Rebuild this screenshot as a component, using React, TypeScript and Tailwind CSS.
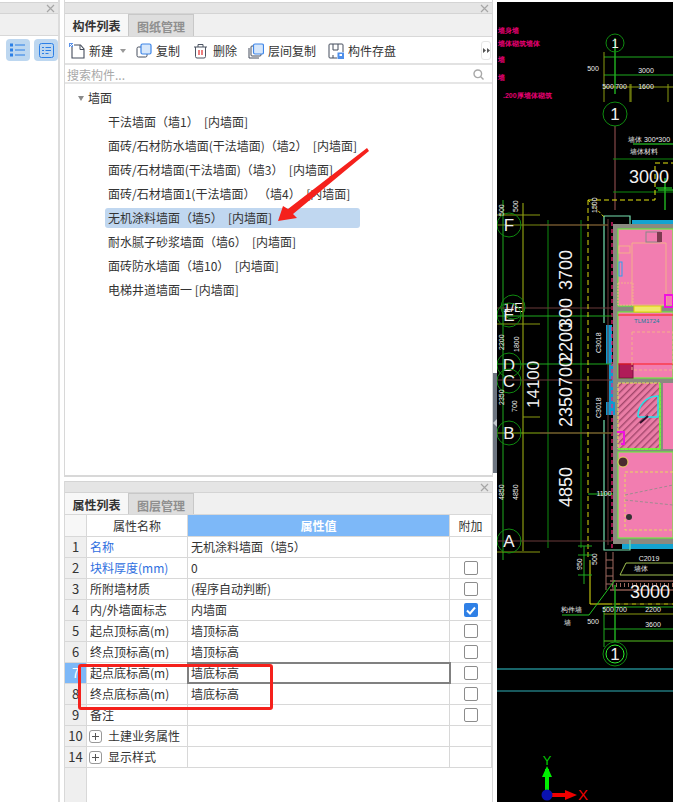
const treeItems = [
  '干法墙面（墙1）  [内墙面]',
  '面砖/石材防水墙面(干法墙面)（墙2）  [内墙面]',
  '面砖/石材墙面(干法墙面)（墙3）  [内墙面]',
  '面砖/石材墙面1(干法墙面） （墙4）  [内墙面]',
  '无机涂料墙面（墙5）  [内墙面]',
  '耐水腻子砂浆墙面（墙6）  [内墙面]',
  '面砖防水墙面（墙10）  [内墙面]',
  '电梯井道墙面一 [内墙面]',
];

type Row = {
  no: number;
  name: string;
  value?: string;
  blue?: boolean;
  box?: boolean;
  checked?: boolean;
  plus?: boolean;
  active?: boolean;
};

const rows: Row[] = [
  { no: 1, name: '名称', value: '无机涂料墙面（墙5）', blue: true },
  { no: 2, name: '块料厚度(mm)', value: '0', blue: true, box: true },
  { no: 3, name: '所附墙材质', value: '(程序自动判断)', box: true },
  { no: 4, name: '内/外墙面标志', value: '内墙面', box: true, checked: true },
  { no: 5, name: '起点顶标高(m)', value: '墙顶标高', box: true },
  { no: 6, name: '终点顶标高(m)', value: '墙顶标高', box: true },
  { no: 7, name: '起点底标高(m)', value: '墙底标高', box: true, active: true },
  { no: 8, name: '终点底标高(m)', value: '墙底标高', box: true },
  { no: 9, name: '备注', box: true },
  { no: 10, name: '土建业务属性', plus: true },
  { no: 14, name: '显示样式', plus: true },
];

const Close = () => (
  <svg width="9" height="9" viewBox="0 0 9 9" className="shrink-0">
    <path d="M1 1l7 7M8 1L1 8" stroke="#a6a6a6" strokeWidth="1.2" />
  </svg>
);

const TitleBar = () => (
  <div className="h-[10px] bg-[#e5e5e5] border-y border-[#d4d4d4] box-content flex items-center justify-end pr-[3px]">
    <Close />
  </div>
);

const Tabs = ({ first, second, height }: { first: string; second: string; height: string }) => (
  <div className={`${height} bg-[#f0f0f0] border-b border-[#d8d8d8] flex font-bold leading-[24px]`}>
    <div className="w-[64px] bg-[#f7f7f7] text-[#333] text-center border-r border-[#c8c8c8]">{first}</div>
    <div className="w-[65px] bg-[#dedede] text-[#8f8f8f] text-center border-r border-t border-[#c8c8c8]">{second}</div>
  </div>
);

const NewIcon = () => (
  <svg width="16" height="16" viewBox="0 0 16 16">
    <path d="M3 3.5V15h12V6L11.500 2H5" fill="none" stroke="#454d5c" strokeWidth="1.1" />
    <path d="M11 2v4.500h4" fill="none" stroke="#454d5c" strokeWidth="1" />
    <path d="M0 0h4v4H0z" fill="#5b93ea" />
    <path d="M1 1h1v1H1zM3 1h1v1H3zM2 2h1v1H2zM1 3h1v1H1z" fill="#fff" />
  </svg>
);

const CopyIcon = () => (
  <svg width="16" height="16" viewBox="0 0 16 16">
    <rect x="1" y="4" width="10" height="10" rx="1.500" fill="#fff" stroke="#454d5c" />
    <rect x="5" y="1" width="10" height="10" rx="1.500" fill="#d6e7fb" stroke="#3f86e8" strokeWidth="1.2" />
  </svg>
);

const TrashIcon = () => (
  <svg width="15" height="16" viewBox="0 0 15 16">
    <path d="M1 4h13M5 4V1.500h5V4" fill="none" stroke="#4d5563" />
    <path d="M2.500 4v9.500a1.500 1.500 0 001.500 1.500h7a1.500 1.500 0 001.500-1.500V4" fill="none" stroke="#4d5563" />
    <path d="M6 7v5M9 7v5" stroke="#e02b2b" strokeWidth="1.2" />
  </svg>
);

const LayerCopyIcon = () => (
  <svg width="16" height="16" viewBox="0 0 16 16">
    <path d="M1 5v10h10" fill="none" stroke="#454d5c" />
    <rect x="3" y="3" width="10" height="10" rx="1" fill="#fff" stroke="#454d5c" />
    <rect x="5.500" y="1" width="10" height="10" rx="1.500" fill="#d6e7fb" stroke="#3f86e8" strokeWidth="1.2" />
  </svg>
);

const SaveIcon = () => (
  <svg width="16" height="16" viewBox="0 0 16 16">
    <path d="M9 15H2a1 1 0 01-1-1V2a1 1 0 011-1h12a1 1 0 011 1v7" fill="none" stroke="#454d5c" />
    <path d="M5 1v6h5V1M5 15v-3" fill="none" stroke="#454d5c" />
    <rect x="9.500" y="9.500" width="6.500" height="6.500" fill="#4f8fea" />
    <rect x="11.500" y="11" width="2.500" height="2" fill="#fff" />
  </svg>
);

const ToolItem = ({ icon, label, className }: { icon: React.ReactNode; label: string; className: string }) => (
  <div className={`flex items-center gap-[4px] ${className}`}>
    <span className="flex w-[16px]">{icon}</span>
    <span>{label}</span>
  </div>
);

const Tree = () => (
  <div className="flex-1 bg-white pt-[4px] pl-[13px] leading-[20px]">
    <div className="flex items-center h-[20px]">
      <span className="w-0 h-0 border-x-[3.5px] border-x-transparent border-t-[5px] border-t-[#8a8a8a] mr-[4px]" />
      墙面
    </div>
    <div className="flex flex-col items-start gap-[4px] mt-[4px]">
      {treeItems.map((t, i) => (
        <div
          key={t}
          className={`h-[20px] ml-[27px] pl-[3px] whitespace-pre rounded-[3px] ${
            i === 4 ? 'w-[255px] bg-[#c0d7f0]' : ''
          }`}
        >
          {t}
        </div>
      ))}
    </div>
  </div>
);

const PropTable = () => (
  <div className="flex-1 flex flex-col bg-white">
    <div className="flex h-[22px] leading-[21px] border-b border-[#d8d8d8]">
      <div className="w-[22px] bg-[#f7f7f7] border-r border-[#d8d8d8]" />
      <div className="w-[101px] text-center border-r border-[#d8d8d8]">属性名称</div>
      <div className="w-[262px] text-center font-bold text-white bg-[#7db8f8] border-r border-[#d8d8d8]">属性值</div>
      <div className="w-[42px] text-center border-r border-[#d8d8d8]">附加</div>
    </div>
    {rows.map((r) => (
      <div key={r.no} className="flex h-[21px] leading-[20px] border-b border-[#d8d8d8]">
        <div
          className={`w-[22px] text-center text-[13px] border-r border-[#d8d8d8] ${
            r.active ? 'bg-[#7db8f8] text-white' : 'bg-[#efefef]'
          }`}
        >
          {r.no}
        </div>
        <div className={`w-[101px] border-r border-[#d8d8d8] flex items-center whitespace-pre ${r.plus ? 'pl-[2px]' : 'pl-[3px]'} ${r.blue ? 'text-[#2f6fe0]' : ''}`}>
          {r.plus && (
            <span className="w-[13px] h-[13px] border border-[#999] rounded-[3px] mr-[6px] flex items-center justify-center">
              <svg width="7" height="7" viewBox="0 0 7 7">
                <path d="M0 3.500h7M3.500 0v7" stroke="#555" />
              </svg>
            </span>
          )}
          {r.name}
        </div>
        <div
          className={`w-[262px] pl-[3px] border-r border-[#d8d8d8] ${
            r.active ? 'outline-2 -outline-offset-1 outline-[#808080]' : ''
          }`}
        >
          {r.value}
        </div>
        <div className="w-[42px] border-r border-[#d8d8d8] flex items-center justify-center">
          {r.box &&
            (r.checked ? (
              <span className="w-[14px] h-[14px] rounded-[2px] bg-[#2f80e6] flex items-center justify-center">
                <svg width="10" height="9" viewBox="0 0 10 9">
                  <path d="M1 4.500l3 3 5-6" fill="none" stroke="#fff" strokeWidth="2" />
                </svg>
              </span>
            ) : (
              <span className="w-[14px] h-[14px] rounded-[2px] border border-[#8c8c8c] bg-white" />
            ))}
        </div>
      </div>
    ))}
    <div className="flex-1 flex">
      <div className="w-[22px] bg-[#efefef] border-r border-[#d8d8d8]" />
    </div>
  </div>
);

const VText = ({ x, y, size, children, fill = '#f2f2f2' }: { x: number; y: number; size: number; children: string; fill?: string }) => (
  <text x={x} y={y} fontSize={size} fill={fill} transform={`rotate(-90 ${x} ${y})`}>
    {children}
  </text>
);

const Bubble = ({ x, y, r = 12, t, size = 17 }: { x: number; y: number; r?: number; t: string; size?: number }) => (
  <g>
    <circle cx={x} cy={y} r={r} fill="none" stroke="#0f8a0f" strokeWidth="1" />
    <text x={x} y={y + size * 0.36} fontSize={size} fill="#efefef" textAnchor="middle">
      {t}
    </text>
  </g>
);

const small = [
  [593, 71, '500'], [646, 73, '3000'], [608, 89, '500'], [621, 89, '700'], [646, 89, '1600'],
  [593, 624, '500'], [608, 612, '500'], [621, 612, '700'], [653, 612, '2200'], [653, 627, '3600'],
  [635, 142, '墙体'], [657, 142, '300*300'], [644, 154, '墙体材料'], [571, 612, '构件墙'], [567, 625, '墙'],
  [641, 571, '墙体'], [649, 561, 'C2019'], [604, 496, '1100'],
] as const;

const CadView = () => (
  <svg viewBox="497 2 176 800" width="176" height="800" className="block bg-black font-['Liberation_Sans',sans-serif]">
    <defs>
      <pattern id="hatch" width="5" height="5" patternUnits="userSpaceOnUse" patternTransform="rotate(45)">
        <rect width="5" height="5" fill="#ea7da6" />
        <rect width="1.400" height="5" fill="#a3476c" />
      </pattern>
    </defs>
    {/* magenta notes */}
    <g fill="#e0006f" fontSize="7" fontWeight="700">
      <text x="498" y="33">墙身墙</text>
      <text x="498" y="46">墙体砌筑墙体</text>
      <text x="498" y="62">墙</text>
      <text x="498" y="80">墙</text>
      <text x="503" y="98">.200厚墙体砌筑</text>
    </g>

    {/* floor plan */}
    <g>
      <rect x="613" y="224" width="60" height="320" fill="#8a8a80" />
      <rect x="618" y="229" width="55" height="77" fill="#f27db0" stroke="#5cff2e" />
      <rect x="618" y="312" width="55" height="66" fill="#f27db0" stroke="#5cff2e" />
      <rect x="618" y="383" width="42" height="66" fill="url(#hatch)" stroke="#e6e650" strokeDasharray="3 1" />
      <rect x="663" y="383" width="10" height="66" fill="#f27db0" />
      <rect x="618" y="452" width="55" height="86" fill="#f27db0" stroke="#5cff2e" />
      <rect x="622" y="544" width="51" height="5" fill="#14a3d0" />
      <rect x="632" y="220" width="41" height="4" fill="#14a3d0" />
      <rect x="634" y="306" width="27" height="6" fill="#f0e86a" stroke="#e0d000" />
      <rect x="606" y="325" width="6" height="39" fill="#109ad0" />
      <rect x="609" y="364" width="4" height="38" fill="#109ad0" />
      <rect x="606" y="402" width="9" height="13" fill="#109ad0" />
      <path d="M604 323V216H630V224M604 420V550H630V540" fill="none" stroke="#76e0b0" strokeWidth="1.2" />
      <path d="M612 222V548" stroke="#ff1f7a" strokeWidth="1.2" strokeDasharray="4 3" />
      <path d="M608 219V545" stroke="#6b3a3a" />
      {/* room furniture */}
      <path d="M632 243H666V305H632Z" fill="none" stroke="#f4b08a" />
      <rect x="619" y="246" width="11" height="7" fill="none" stroke="#f4b08a" />
      <rect x="618" y="283" width="15" height="22" fill="none" stroke="#f4b08a" strokeDasharray="2 1" />
      <rect x="646" y="232" width="14" height="10" fill="none" stroke="#888" />
      <rect x="657" y="232" width="5" height="10" fill="#7c3a50" />
      <rect x="619" y="262" width="3" height="14" fill="none" stroke="#2a9ff0" />
      <rect x="619" y="364" width="14" height="14" fill="#b01c58" stroke="#7a1040" />
      <path d="M618 315H673M618 364H673" stroke="#ff1b1b" />
      <rect x="632" y="332" width="41" height="38" fill="none" stroke="#f4b08a" strokeDasharray="3 2" />
      <text x="634" y="323" fontSize="6" fill="#0d7fa0">TLM1724</text>
      <path d="M638 417A20 20 0 01658 396V417H638" fill="none" stroke="#22e4ea" strokeWidth="1.500" />
      <path d="M640 423l8-7" stroke="#30102a" strokeWidth="2" />
      <rect x="625" y="472" width="52" height="58" fill="none" stroke="#e8d860" strokeDasharray="3 2" />
      <path d="M625 495L673 485M625 500L673 505" stroke="#a08a90" strokeDasharray="3 2" />
      <circle cx="623" cy="462" r="5" fill="#4a2a30" stroke="#e8d860" />
      <circle cx="629" cy="517" r="3" fill="#333" />
      <path d="M617 432h7v12h-3" fill="none" stroke="#f010e0" strokeWidth="2" />
      <rect x="665" y="295" width="8" height="12" fill="none" stroke="#f010e0" strokeWidth="2" />
      <path d="M660 383V449H618" fill="none" stroke="#5cff2e" strokeWidth="1.500" />
      {/* lower ladder */}
      <path d="M606 552V590M613 552V590M606 560H613M606 568H613M606 576H613M606 584H613" stroke="#a06a60" />
      <path d="M610 581H673M610 590H673" stroke="#8a5a50" strokeWidth="1.500" />
      <path d="M612 585H673" stroke="#a06a60" strokeWidth="4" strokeDasharray="1 3" />
      <path d="M620 575L626 563H673M620 575H673" fill="none" stroke="#a0c050" />
    </g>

    {/* axis lines */}
    <g fill="none">
      <path d="M503 200V541M503 541V560" stroke="#1faa1f" />
      <path d="M523 203V551" stroke="#8a9a10" strokeWidth="1.2" />
      <path d="M548 220V548M581 220V548" stroke="#0f8a0f" />
      <path d="M497 225H608" stroke="#7a8a10" />
      <path d="M540 225H608" stroke="#6b3a3a" />
      <path d="M497 215H540M497 324H540M523 417H540M497 552H540" stroke="#8a9a10" strokeWidth="1.2" />
      <path d="M497 308H612M497 380H612" stroke="#6b3a3a" />
      <path d="M497 316H612M497 364H612" stroke="#1faa1f" />
      <path d="M497 433H612" stroke="#8ab010" />
      <path d="M540 433H612M497 541H612" stroke="#6b3a3a" />
      <path d="M615 38V94" stroke="#1faa1f" strokeWidth="1.500" />
      <path d="M604 57H673M604 75H673" stroke="#1faa1f" />
      <path d="M604 52V102M630 84V102M631 84V102M668 84V102" stroke="#8a9a10" />
      <path d="M604 87H673" stroke="#8a9a10" />
      <path d="M615 126V210" stroke="#6b3a3a" strokeWidth="1.500" />
      <path d="M613 159H673M613 192H673" stroke="#0f8a0f" />
      <path d="M633 144H673" stroke="#2cf02c" strokeWidth="1.2" />
      <path d="M658 190H673M665 178V210" stroke="#1faa1f" strokeWidth="1.500" />
      <path d="M656 188H672" stroke="#2cf02c" />
      <path d="M588 200H655V163H673" stroke="#e6e610" strokeWidth="1" strokeDasharray="5 3" />
      <path d="M588 200V560" stroke="#d8d810" strokeDasharray="5 3" />
      <path d="M588 200L605 218" stroke="#d8d810" strokeDasharray="3 2" />
      <path d="M590 560V604H673" stroke="#e6e610" />
      <path d="M612 604H673" stroke="#000" strokeDasharray="4 4" />
      <path d="M584 546V584M578 546H592M578 555H592M578 575H592" stroke="#1faa1f" />
      <path d="M588 494H613" stroke="#22c022" />
      <path d="M604 607V647M604 607H673M604 629H673" stroke="#1faa1f" />
      <path d="M604 614H673" stroke="#8a9a10" />
      <path d="M604 641H673" stroke="#55c020" />
      <path d="M615 585V642" stroke="#1faa1f" strokeWidth="1.500" />
      <path d="M562 615H589L615 580" stroke="#22c022" />
      <path d="M497 669H673" stroke="#30c8d0" />
      <path d="M497 691H673" stroke="#30b0b8" />
    </g>

    <circle cx="615" cy="654" r="9" fill="none" stroke="#2cf02c" />
    <Bubble x={615} y={43} r={9} t="1" size={13} />
    <Bubble x={615} y={114} t="1" />
    <Bubble x={509} y={225} t="F" />
    <Bubble x={513} y={307} t="1/E" size={13} />
    <Bubble x={509} y={315} t="E" />
    <Bubble x={509} y={365} t="D" />
    <Bubble x={509} y={381} t="C" />
    <Bubble x={509} y={433} t="B" />
    <Bubble x={509} y={541} t="A" />
    <Bubble x={615} y={654} t="1" />

    {/* dimensions */}
    <g fontSize="18" fill="#f2f2f2">
      <text x="629" y="183">3000</text>
      <text x="630" y="598">3000</text>
    </g>
    <VText x={572} y={290} size={18}>3700</VText>
    <VText x={572} y={427} size={18}>2350</VText>
    <VText x={572} y={387} size={18}>700</VText>
    <VText x={572} y={362} size={18}>2200</VText>
    <VText x={572} y={328} size={18}>300</VText>
    <VText x={539} y={408} size={17}>14100</VText>
    <VText x={572} y={507} size={18}>4850</VText>
    <g fill="#ececec" fontSize="7">
      {small.map(([x, y, t]) => (
        <text key={`${x}-${y}`} x={x} y={y} textAnchor="middle">
          {t}
        </text>
      ))}
    </g>
    <VText x={504} y={216} size={7}>500</VText>
    <VText x={518} y={212} size={7}>500</VText>
    <VText x={504} y={500} size={7}>4850</VText>
    <VText x={518} y={500} size={7}>4850</VText>
    <VText x={504} y={350} size={7}>2200</VText>
    <VText x={519} y={352} size={7}>1800</VText>
    <VText x={517} y={412} size={7}>700</VText>
    <VText x={504} y={405} size={7}>2350</VText>
    <VText x={597} y={213} size={7}>1500</VText>
    <VText x={597} y={565} size={7}>500</VText>
    <VText x={582} y={570} size={7}>950</VText>
    <VText x={601} y={353} size={7}>C3018</VText>
    <VText x={601} y={418} size={7}>C3018</VText>

    {/* coordinate axis */}
    <path d="M547 791V769" stroke="#00ee00" strokeWidth="4" />
    <path d="M547 766l-5 11h10z" fill="#00ee00" />
    <path d="M551 795H566" stroke="#f00000" strokeWidth="4" />
    <path d="M577 795l-12-5v10z" fill="#f00000" />
    <circle cx="547" cy="795" r="5.500" fill="#0a12b0" />
    <text x="547" y="765" fontSize="13" fill="#00c800" textAnchor="middle">Y</text>
    <text x="583" y="800" fontSize="15" fill="#f00000" textAnchor="middle">X</text>
  </svg>
);

export default function App() {
  return (
    <div className="relative w-[673px] h-[802px] overflow-hidden bg-white flex text-[12px] text-[#333] font-['Noto_Sans_CJK_SC',sans-serif]">
      {/* left docked panel */}
      <div className="w-[60px] pt-[2px] border-r-2 border-[#dcdcdc] flex flex-col">
        <TitleBar />
        <div className="h-[22px] bg-[#f0f0f0] border-b border-[#d8d8d8]" />
        <div className="flex gap-[4px] pl-[6px] pt-[3px]">
          <div className="w-[24px] h-[22px] rounded-[4px] bg-[#bdd7f0] flex items-center justify-center">
            <svg width="16" height="14" viewBox="0 0 16 14" fill="none" stroke="#2b7fe6">
              <path d="M5 2h10M5 7h10M5 12h10" />
              <rect x=".5" y="1" width="2" height="2" />
              <rect x=".5" y="6" width="2" height="2" />
              <rect x=".5" y="11" width="2" height="2" />
            </svg>
          </div>
          <div className="w-[24px] h-[22px] rounded-[4px] bg-[#bdd7f0] flex items-center justify-center">
            <svg width="15" height="15" viewBox="0 0 15 15" fill="none" stroke="#2b7fe6">
              <rect x=".5" y=".5" width="14" height="14" rx="2" />
              <path d="M3 4.500h2M6.500 4.500h5.500M3 7.500h2M6.500 7.500h5.500M3 10.500h2M6.500 10.500h3" />
            </svg>
          </div>
        </div>
      </div>

      {/* middle column */}
      <div className="w-[429px] ml-[4px] flex flex-col">
        <div className="h-[477px] pt-[2px] flex flex-col border-x border-b-2 border-[#d8d8d8]">
          <TitleBar />
          <Tabs first="构件列表" second="图纸管理" height="h-[23px]" />
          <div className="h-[28px] pt-[1px] bg-white border-b-2 border-[#e2e2e2] flex items-center">
            <ToolItem icon={<NewIcon />} label="新建" className="ml-[4px]" />
            <span className="w-0 h-0 ml-[7px] border-x-[3px] border-x-transparent border-t-[4px] border-t-[#999]" />
            <ToolItem icon={<CopyIcon />} label="复制" className="ml-[10px]" />
            <ToolItem icon={<TrashIcon />} label="删除" className="ml-[13px]" />
            <ToolItem icon={<LayerCopyIcon />} label="层间复制" className="ml-[11px]" />
            <ToolItem icon={<SaveIcon />} label="构件存盘" className="ml-[12px]" />
            <div className="ml-auto mr-[1px] w-[10px] h-[19px] rounded-[3px] border border-[#e6e6e6] flex items-center justify-center">
              <svg width="7" height="5" viewBox="0 0 7 5" fill="#555">
                <path d="M0 0l3 2.500-3 2.500zM4 0l3 2.500-3 2.500z" />
              </svg>
            </div>
          </div>
          <div className="h-[19px] pt-[1px] bg-white border-b-2 border-[#e6e6e6] flex items-center justify-between pl-[2px] pr-[8px] text-[#a9a9a9] leading-[17px]">
            <span>搜索构件...</span>
            <svg width="11" height="11" viewBox="0 0 11 11" fill="none" stroke="#a8a8a8" strokeWidth="1.4">
              <circle cx="4.800" cy="4.800" r="3.800" />
              <path d="M7.500 7.500L10.500 10.500" />
            </svg>
          </div>
          <Tree />
        </div>
        <div className="flex-1 mt-[4px] flex flex-col border-x border-[#d8d8d8]">
          <TitleBar />
          <Tabs first="属性列表" second="图层管理" height="h-[22px]" />
          <PropTable />
        </div>
      </div>

      {/* gutter with the collapse handle */}
      <div className="w-[4px] pt-[373px]">
        <div className="h-[100px] bg-[#6d7580] flex items-center">
          <span className="w-0 h-0 border-y-[4px] border-y-transparent border-r-[4px] border-r-[#c5c9ce]" />
        </div>
      </div>

      {/* drawing */}
      <div className="pt-[2px] w-[176px] shrink-0">
        <CadView />
      </div>

      {/* red annotations over the screenshot */}
      <div className="absolute left-[78px] top-[664px] w-[195px] h-[46px] border-[3px] border-[#f5211c] rounded-[3px]" />
      <svg className="absolute left-[270px] top-[145px]" width="105" height="85" viewBox="0 0 105 85">
        <path d="M99 6L23 69l4 4-19 3 5-15 5 3L97 3z" fill="#f5211c" />
      </svg>
    </div>
  );
}
